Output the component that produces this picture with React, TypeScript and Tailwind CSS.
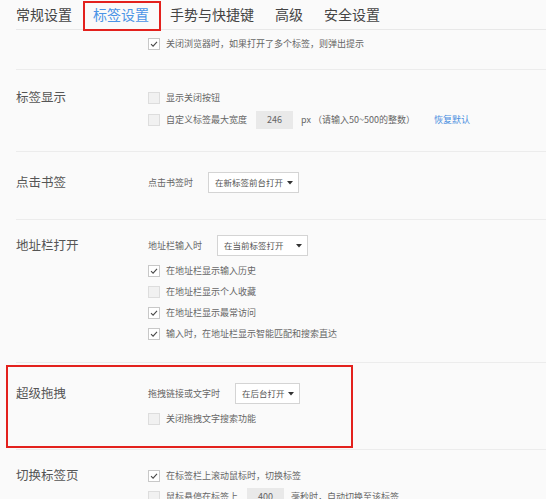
import clsx from "clsx";

const FONT = { fontFamily: '"Noto Sans CJK SC", "Noto Sans", sans-serif' };

const Check = ({ checked }: { checked?: boolean }) => (
  <span
    className={clsx(
      "flex h-[12px] w-[12px] shrink-0 items-center justify-center border",
      checked ? "border-[#c8c8c8] bg-white" : "border-[#dddddd] bg-[#f1f1f1]"
    )}
  >
    {checked && (
      <svg viewBox="0 0 12 12" className="h-[10px] w-[10px]">
        <path d="M2.4 6.1 L4.9 8.6 L9.6 3.4" fill="none" stroke="#4a4a4a" strokeWidth="1.3" />
      </svg>
    )}
  </span>
);

const CheckRow = ({ checked, children }: { checked?: boolean; children: React.ReactNode }) => (
  <div className="flex h-[21px] items-center gap-[6px] text-[9px] text-[#666]">
    <Check checked={checked} />
    {children}
  </div>
);

const Select = ({ value, width }: { value: string; width: string }) => (
  <div
    className={clsx(
      "flex h-[21px] items-center justify-between border border-[#d4d4d4] bg-white pl-[6px] pr-[5px] text-[8.5px] text-[#555]",
      width
    )}
  >
    <span>{value}</span>
    <svg viewBox="0 0 6 4" className="h-[4px] w-[6px]">
      <path d="M0 0 L6 0 L3 3.5 Z" fill="#333" />
    </svg>
  </div>
);

const NumBox = ({ value }: { value: string }) => (
  <span className="flex h-[18px] w-[37px] items-center justify-center bg-[#e9e9e9] text-[9px] text-[#666]">
    {value}
  </span>
);

const Label = ({ children }: { children: React.ReactNode }) => (
  <div className="flex h-[21px] w-[132px] shrink-0 items-center text-[12.5px] text-[#555]">{children}</div>
);

export default function App() {
  return (
    <div className="min-h-screen w-[546px] overflow-hidden bg-[#fafafa]" style={FONT}>
      <div className="pl-[16px]">
        {/* tabs */}
        <div className="relative flex h-[30px] items-center gap-[21px] border-b border-[#e8e8e8] pb-[1px] text-[14px] text-[#444]">
          <span>常规设置</span>
          <span className="text-[#4a94e6]">标签设置</span>
          <span>手势与快捷键</span>
          <span>高级</span>
          <span>安全设置</span>
          <span className="absolute left-[67px] top-[1px] h-[30px] w-[78px] border-2 border-[#e3211d]" />
        </div>

        <div className="border-b border-[#ececec] pb-[15px] pt-[3px] pl-[132px]">
          <CheckRow checked>关闭浏览器时，如果打开了多个标签，则弹出提示</CheckRow>
        </div>

        <div className="flex border-b border-[#ececec] pb-[20px] pt-[17px]">
          <Label>标签显示</Label>
          <div className="flex flex-col">
            <div className="flex h-[22px] items-center gap-[6px] text-[9px] text-[#666]">
              <Check />
              显示关闭按钮
            </div>
            <div className="flex h-[22px] items-center gap-[6px] text-[9px] text-[#666]">
              <Check />
              <span>自定义标签最大宽度</span>
              <span className="ml-[3px]">
                <NumBox value="246" />
              </span>
              <span className="ml-[2px]">px （请输入50~500的整数）</span>
              <span className="ml-[13px] text-[#4a8fe0]">恢复默认</span>
            </div>
          </div>
        </div>

        <div className="flex border-b border-[#ececec] pb-[26px] pt-[20px]">
          <Label>点击书签</Label>
          <div className="flex h-[21px] items-center gap-[15px] text-[9px] text-[#666]">
            <span>点击书签时</span>
            <Select value="在新标签前台打开" width="w-[91px]" />
          </div>
        </div>

        <div className="flex border-b border-[#ececec] pb-[18px] pt-[15px]">
          <Label>地址栏打开</Label>
          <div className="flex flex-col">
            <div className="mb-[4px] flex h-[21px] items-center gap-[15px] text-[9px] text-[#666]">
              <span>地址栏输入时</span>
              <Select value="在当前标签打开" width="w-[91px]" />
            </div>
            <CheckRow checked>在地址栏显示输入历史</CheckRow>
            <CheckRow>在地址栏显示个人收藏</CheckRow>
            <CheckRow checked>在地址栏显示最常访问</CheckRow>
            <CheckRow checked>输入时，在地址栏显示智能匹配和搜索直达</CheckRow>
          </div>
        </div>

        <div className="relative flex border-b border-[#ececec] pb-[20px] pt-[20px]">
          <Label>超级拖拽</Label>
          <div className="flex flex-col">
            <div className="mb-[4px] flex h-[21px] items-center gap-[15px] text-[9px] text-[#666]">
              <span>拖拽链接或文字时</span>
              <Select value="在后台打开" width="w-[65px]" />
            </div>
            <CheckRow>关闭拖拽文字搜索功能</CheckRow>
          </div>
          <span className="absolute left-[-10px] top-[2px] h-[83px] w-[347px] border-2 border-[#e3211d]" />
        </div>

        <div className="flex pt-[15px]">
          <Label>切换标签页</Label>
          <div className="flex flex-col">
            <CheckRow checked>在标签栏上滚动鼠标时，切换标签</CheckRow>
            <div className="flex h-[21px] items-center gap-[6px] text-[9px] text-[#666]">
              <Check />
              <span>鼠标悬停在标签上</span>
              <span className="ml-[3px]">
                <NumBox value="400" />
              </span>
              <span className="ml-[1px]">毫秒时，自动切换至该标签</span>
            </div>
          </div>
        </div>
      </div>
    </div>
  );
}
